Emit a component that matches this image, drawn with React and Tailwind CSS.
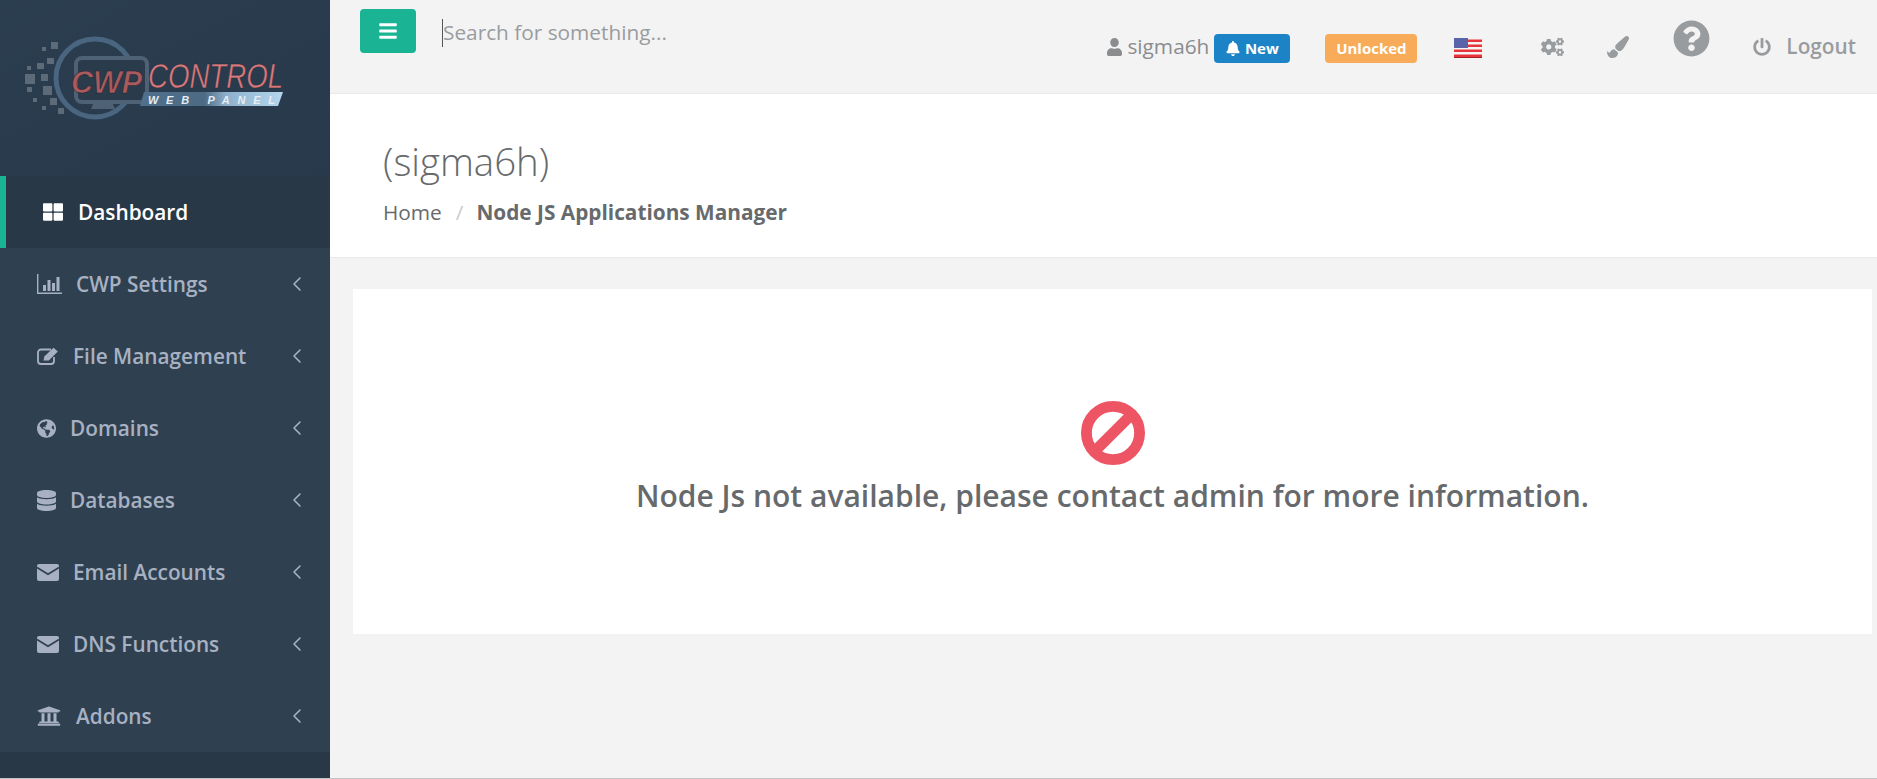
import React from 'react';
import { ChevronLeft } from 'lucide-react';
import {
  FaThLarge, FaGlobeAmericas, FaDatabase, FaUniversity, FaBars, FaUser, FaBell,
  FaCogs, FaPaintBrush, FaQuestionCircle, FaPowerOff,
} from 'react-icons/fa';

const BarChartIcon = ({ className }) => (
  <svg viewBox="0 0 25 20" className={className} fill="currentColor">
    <path d="M0 0h1.4v18.4H25V20H0z" />
    <path d="M6 11h3v6H6zM10.5 6h3v11h-3zM15 9h3v8h-3zM19.5 3h3v14h-3z" />
  </svg>
);

const EditIcon = ({ className }) => (
  <svg viewBox="0 0 22 18" className={className} fill="none">
    <path d="M14 2.500H4A3 3 0 0 0 1 5.500V14a3 3 0 0 0 3 3h10a3 3 0 0 0 3-3v-4" stroke="currentColor" strokeWidth="1.8" />
    <path d="M6.500 13.500l.8-4L16.500.8 20.800 4.500l-9 9z" fill="currentColor" />
  </svg>
);

const EnvelopeIcon = ({ className }) => (
  <svg viewBox="0 0 22 17" className={className}>
    <rect width="22" height="17" rx="2" fill="currentColor" />
    <path d="M0 3.500l11 6.800 11-6.800" fill="none" stroke="#2f4050" strokeWidth="1.600" />
  </svg>
);

const BanIcon = ({ className }) => (
  <svg viewBox="0 0 65 65" className={className} fill="none" stroke="currentColor" strokeWidth="11">
    <circle cx="32.500" cy="32.500" r="27" />
    <path d="M13 52L52 13" />
  </svg>
);

const menu = [
  { label: 'CWP Settings', icon: BarChartIcon, size: 'w-[25px] h-5', gap: 'mr-[14px]' },
  { label: 'File Management', icon: EditIcon, size: 'w-[22px] h-[18px]', gap: 'mr-[14px]' },
  { label: 'Domains', icon: FaGlobeAmericas, size: 'w-[19px] h-[19px]', gap: 'mr-[14px]' },
  { label: 'Databases', icon: FaDatabase, size: 'w-[19px] h-[21px]', gap: 'mr-[14px]' },
  { label: 'Email Accounts', icon: EnvelopeIcon, size: 'w-[22px] h-[17px]', gap: 'mr-[14px]' },
  { label: 'DNS Functions', icon: EnvelopeIcon, size: 'w-[22px] h-[17px]', gap: 'mr-[14px]' },
  { label: 'Addons', icon: FaUniversity, size: 'w-6 h-[22px]', gap: 'mr-[15px]' },
];

const Logo = () => (
  <svg viewBox="0 0 270 100" className="w-[270px] h-[100px] overflow-visible">
    <defs>
      <linearGradient id="bar" x1="0" x2="1" y1="0" y2="0">
        <stop offset="0" stopColor="#50708c" />
        <stop offset="0.45" stopColor="#4d6a84" />
        <stop offset="0.6" stopColor="#8fb0cb" />
        <stop offset="1" stopColor="#b5d6ee" />
      </linearGradient>
    </defs>
    <g fill="#5d6b78">
      <rect x="31" y="12" width="7" height="7" />
      <rect x="22" y="17" width="4" height="4" />
      <rect x="27" y="28" width="7" height="6" />
      <rect x="17" y="33" width="7" height="6" />
      <rect x="7" y="36" width="4" height="4" />
      <rect x="5" y="44" width="10" height="10" />
      <rect x="21" y="44" width="7" height="7" />
      <rect x="7" y="57" width="5" height="5" />
      <rect x="23" y="56" width="9" height="9" />
      <rect x="13" y="68" width="4" height="4" />
      <rect x="30" y="68" width="7" height="7" />
      <rect x="22" y="76" width="4" height="4" />
      <rect x="38" y="78" width="6" height="6" />
    </g>
    <circle cx="75" cy="48" r="39" fill="none" stroke="#4a6580" strokeWidth="5" />
    <rect x="56" y="28" width="71" height="44" rx="6" fill="#2a3b4c" stroke="#4f6275" strokeWidth="4" />
    <path d="M74 72h18l3 7H71z" fill="#4f6275" />
    <text x="51" y="63" fontFamily="'Liberation Sans', sans-serif" fontSize="32" fontWeight="700" fontStyle="italic" fill="#a95a5c" stroke="#1b2631" strokeWidth="0.6" textLength="71" lengthAdjust="spacingAndGlyphs">CWP</text>
    <text x="128" y="58" fontFamily="'Liberation Sans', sans-serif" fontSize="35" fontStyle="italic" fill="#d9787c" stroke="#1b2631" strokeWidth="0.4" textLength="135" lengthAdjust="spacingAndGlyphs">CONTROL</text>
    <path d="M124 62h139l-5 14H120z" fill="url(#bar)" />
    <text x="128" y="74" fontFamily="'Liberation Sans', sans-serif" fontSize="11" fontStyle="italic" fontWeight="700" fill="#e6edf3" textLength="127">WEB PANEL</text>
  </svg>
);

const Flag = () => (
  <svg viewBox="0 0 28 20" className="w-7 h-5">
    <rect width="28" height="20" fill="#f4f4f4" />
    <path d="M0 1.500h28v2.400H0zM0 6.500h28v2.400H0zM0 11.500h28v2.400H0zM0 16.500h28v2.400H0z" fill="#e8333a" />
    <rect y="19" width="28" height="1" fill="#a81d22" />
    <rect width="14" height="10" fill="#5a62a8" />
  </svg>
);

export default function App() {
  return (
    <div className="h-[779px] overflow-hidden flex bg-[#f3f3f4] border-b border-[#c4c4c4] text-[#676a6c] font-['Open_Sans',sans-serif]">
      {/* sidebar */}
      <aside className="w-[330px] shrink-0 bg-[#293846] flex flex-col">
        <div className="h-[176px] bg-gradient-to-br from-[#2b3e50] to-[#27394a] pl-[20px] pt-[30px]">
          <Logo />
        </div>
        <div className="h-[72px] flex items-center border-l-[6px] border-[#1ab394] pl-[37px] text-white text-[20.8px] font-semibold">
          <FaThLarge className="w-5 h-5 mr-[15px]" />
          <span className="pt-[2px]">Dashboard</span>
        </div>
        <nav className="bg-[#2f4050]">
          {menu.map(({ label, icon: Icon, size, gap }) => (
            <div key={label} className="h-[72px] flex items-center pl-[37px] pr-[21px] text-[#a7b1c2] text-[20.8px] font-semibold">
              <Icon className={`${size} ${gap} shrink-0`} preserveAspectRatio="none" />
              <span className="flex-1 pt-[2px]">{label}</span>
              <ChevronLeft className="w-6 h-6" strokeWidth={1.6} />
            </div>
          ))}
        </nav>
      </aside>

      <main className="flex-1 min-w-0 flex flex-col">
        {/* top bar */}
        <header className="h-[94px] shrink-0 border-b border-[#e7eaec] flex items-start pl-[30px]">
          <button className="mt-[9px] w-14 h-11 rounded bg-[#1ab394] text-white flex items-center justify-center">
            <FaBars className="w-5 h-5" />
          </button>
          <input
            className="mt-[19px] ml-[26px] w-[400px] h-7 border-l border-[#555] bg-transparent outline-none text-[20.8px] placeholder:text-[#999c9e]"
            placeholder="Search for something..."
          />
          <div className="ml-auto mt-[21px] pr-[21px] flex items-start text-[#999c9e]">
            <div className="h-[52px] flex items-center text-[#8a8c8e]">
              <FaUser className="w-[15px] h-[18px] mr-[5px]" preserveAspectRatio="none" />
              <span className="text-[20.8px]">sigma6h</span>
            </div>
            <div className="mt-[13px] ml-[5px] w-[76px] h-[29px] rounded bg-[#1c84c6] text-white text-[15px] font-bold flex items-center justify-center">
              <FaBell className="w-[14px] h-[15px] mr-[5px]" />
              New
            </div>
            <div className="mt-[13px] ml-[35px] w-[92px] h-[29px] rounded bg-[#f8ac59] text-white text-[15px] font-bold flex items-center justify-center">
              Unlocked
            </div>
            <div className="mt-[17px] ml-[37px]"><Flag /></div>
            <FaCogs className="mt-[16px] ml-[59px] w-[23px] h-[20px]" />
            <FaPaintBrush className="mt-[15px] ml-[43px] w-[22px] h-[22px]" />
            <FaQuestionCircle className="-mt-px ml-[44px] w-[37px] h-[37px]" />
            <FaPowerOff className="mt-[17px] ml-[43px] w-[18px] h-[18px]" />
            <div className="h-[52px] flex items-center ml-[15px]">
              <span className="text-[20.8px] font-semibold">Logout</span>
            </div>
          </div>
        </header>

        {/* page heading */}
        <section className="h-[164px] shrink-0 bg-white border-b border-[#e7eaec] pl-[53px] pt-[42px]">
          <h2 className="text-[38.4px] font-light leading-[50px]">(sigma6h)</h2>
          <div className="mt-[12px] text-[20.8px] leading-7 flex">
            <span>Home</span>
            <span className="ml-[14px] mr-[13px] text-[#ccc]">/</span>
            <strong className="font-bold">Node JS Applications Manager</strong>
          </div>
        </section>

        {/* message */}
        <section className="ml-[23px] mr-[5px] mt-[31px] h-[345px] bg-white flex flex-col items-center pt-[112px]">
          <BanIcon className="w-[64px] h-[64px] text-[#ed5565]" />
          <h3 className="mt-[11px] text-[30px] leading-[40px] font-semibold">
            Node Js not available, please contact admin for more information.
          </h3>
        </section>
      </main>
    </div>
  );
}
